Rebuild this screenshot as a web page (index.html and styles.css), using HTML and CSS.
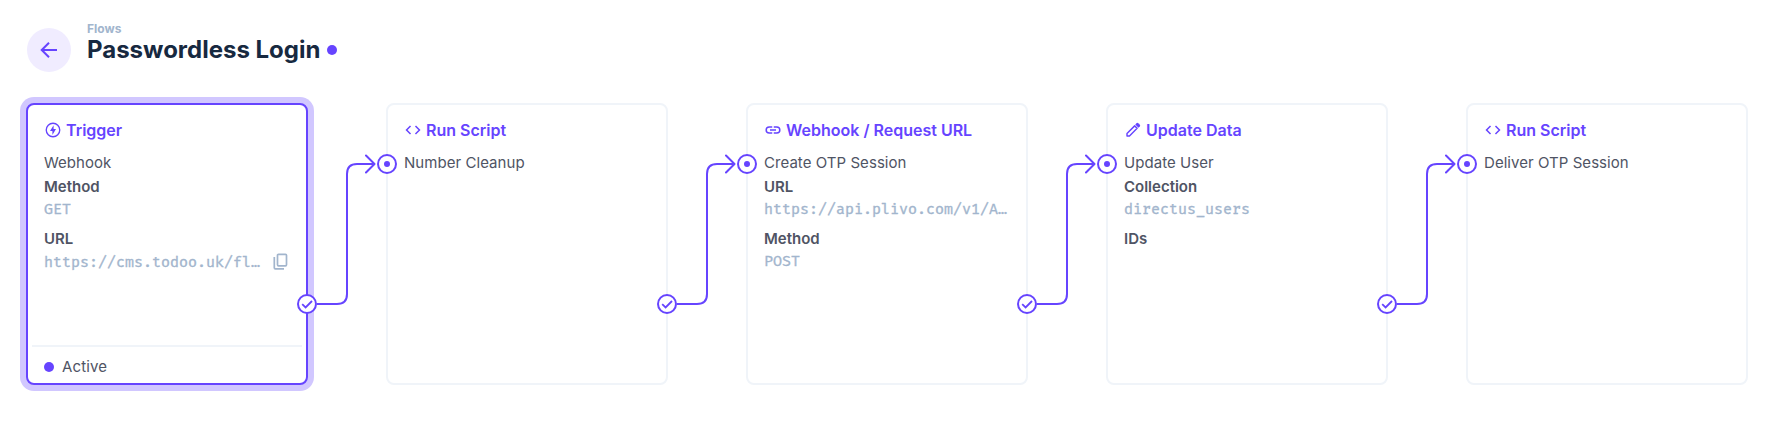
FILE: index.html
```html
<!DOCTYPE html>
<html lang="en">
<head>
<meta charset="utf-8">
<title>Passwordless Login</title>
<link rel="stylesheet" href="styles.css">
</head>
<body>
<svg class="defs" aria-hidden="true">
  <symbol id="code" viewBox="0 0 24 24"><path d="M8.7 6.7 3.4 12l5.3 5.3M15.3 6.7l5.3 5.3-5.3 5.3" fill="none" stroke="currentColor" stroke-width="2"/></symbol>
  <symbol id="check" viewBox="0 0 20 20"><circle cx="10" cy="10" r="9" fill="#fff" stroke="currentColor" stroke-width="2"/><path d="M5.2 10.2 8.6 13.5 15 7" fill="none" stroke="currentColor" stroke-width="1.8"/></symbol>
  <symbol id="target" viewBox="0 0 20 20"><circle cx="10" cy="10" r="9" fill="#fff" stroke="currentColor" stroke-width="2"/><circle cx="10" cy="10" r="3" fill="currentColor"/></symbol>
  <symbol id="wire" viewBox="0 0 60 160"><path d="M0 150H20Q30 150 30 140V20Q30 10 40 10H57M49 1.5 57.5 10 49 18.500" fill="none" stroke="currentColor" stroke-width="2" stroke-linecap="round" stroke-linejoin="round"/></symbol>
</svg>

<header class="header">
  <button class="back" aria-label="Back">
    <svg class="icon-lg" viewBox="0 0 24 24"><path d="M20 12H5M12 4.700 4.700 12l7.300 7.300" fill="none" stroke="currentColor" stroke-width="2"/></svg>
  </button>
  <div class="heading">
    <div class="crumb">Flows</div>
    <h1 class="title">Passwordless Login <span class="dot"></span></h1>
  </div>
</header>

<main class="flow">
  <section class="card selected">
    <h2 class="name"><svg class="icon" viewBox="0 0 24 24"><circle cx="12" cy="12" r="9" fill="none" stroke="currentColor" stroke-width="1.800"/><path d="M12.800 5.500 8 13.200h3.200v5.300L16 10.800h-3.200z" fill="currentColor"/></svg>Trigger</h2>
    <div class="body">
      <p class="label">Webhook</p>
      <dl class="options">
        <dt>Method</dt><dd>GET</dd>
        <dt>URL</dt><dd class="copyable"><span>https://cms.todoo.uk/fl…</span><svg class="icon" viewBox="0 0 18 18"><rect x="5.500" y="1.300" width="9" height="11.500" rx="1" fill="none" stroke="currentColor" stroke-width="1.700"/><path d="M2.300 4V14.800a1 1 0 0 0 1 1H12" fill="none" stroke="currentColor" stroke-width="1.700"/></svg></dd>
      </dl>
    </div>
    <footer class="status"><span class="dot"></span>Active</footer>
    <svg class="port out"><use href="#check"/></svg>
    <svg class="wire"><use href="#wire"/></svg>
  </section>

  <section class="card">
    <h2 class="name"><svg class="icon"><use href="#code"/></svg>Run Script</h2>
    <div class="body"><p class="label">Number Cleanup</p></div>
    <svg class="port in"><use href="#target"/></svg>
    <svg class="port out"><use href="#check"/></svg>
    <svg class="wire"><use href="#wire"/></svg>
  </section>

  <section class="card">
    <h2 class="name"><svg class="icon" viewBox="0 0 24 24"><path d="M11 7.900H7a4.100 4.100 0 0 0 0 8.200h4M13 7.900h4a4.100 4.100 0 0 1 0 8.200h-4M8 12h8" fill="none" stroke="currentColor" stroke-width="2"/></svg>Webhook / Request URL</h2>
    <div class="body">
      <p class="label">Create OTP Session</p>
      <dl class="options">
        <dt>URL</dt><dd>https://api.plivo.com/v1/A…</dd>
        <dt>Method</dt><dd>POST</dd>
      </dl>
    </div>
    <svg class="port in"><use href="#target"/></svg>
    <svg class="port out"><use href="#check"/></svg>
    <svg class="wire"><use href="#wire"/></svg>
  </section>

  <section class="card">
    <h2 class="name"><svg class="icon" viewBox="0 0 24 24"><path d="M4 20v-3.300L14.200 6.500l3.300 3.300L7.300 20z" fill="none" stroke="currentColor" stroke-width="1.900" stroke-linejoin="round"/><path d="M15 4.700 17 2.700Q18 2 19 2.900L21.200 5.100Q22 6 21.200 7L19.300 9z" fill="currentColor"/></svg>Update Data</h2>
    <div class="body">
      <p class="label">Update User</p>
      <dl class="options">
        <dt>Collection</dt><dd>directus_users</dd>
        <dt>IDs</dt>
      </dl>
    </div>
    <svg class="port in"><use href="#target"/></svg>
    <svg class="port out"><use href="#check"/></svg>
    <svg class="wire"><use href="#wire"/></svg>
  </section>

  <section class="card">
    <h2 class="name"><svg class="icon"><use href="#code"/></svg>Run Script</h2>
    <div class="body"><p class="label">Deliver OTP Session</p></div>
    <svg class="port in"><use href="#target"/></svg>
  </section>
</main>
</body>
</html>
```

FILE: styles.css
```css
* { box-sizing: border-box; margin: 0; }
body {
  min-height: 423px;
  padding: 20px 26px 0;
  background: #fff;
  color: #4f5464;
  font: 500 15px/24px Inter, sans-serif;
}
.defs { position: absolute; width: 0; height: 0; }
.header { display: flex; height: 83px; gap: 16px; padding-left: 1px; }
.back {
  display: flex; align-items: center; justify-content: center;
  width: 44px; height: 44px; margin-top: 8px; padding: 0;
  border: 0; border-radius: 50%;
  background: #f0ecff; color: #6644ff;
}
.icon-lg { width: 24px; height: 24px; }
.crumb { color: #a2b5cd; font-size: 12px; font-weight: 700; line-height: 18px; }
.title {
  display: flex; align-items: center; gap: 7px;
  color: #172940; font-size: 24px; font-weight: 700; line-height: 24px;
}
.dot { width: 10px; height: 10px; border-radius: 50%; background: #6644ff; }
.flow { display: grid; grid-template-columns: repeat(5, 282px); gap: 78px; }
.card {
  position: relative;
  display: flex; flex-direction: column;
  height: 282px;
  border: 2px solid #f0f4f9; border-radius: 8px;
  background: #fff;
}
.selected { border-color: #6644ff; box-shadow: 0 0 0 6px #d1c7ff; }
.name {
  display: flex; align-items: center; gap: 4px;
  padding: 13px 16px 0;
  color: #6644ff; font-size: 16px; font-weight: 600; line-height: 24px;
}
.icon { flex: none; width: 18px; height: 18px; }
.body { flex: 1; padding: 9px 16px 0; }
.label { font-weight: 400; letter-spacing: .05px; }
.options dt { font-weight: 600; }
.options dd {
  height: 22px; margin-bottom: 6px;
  color: #a2b5cd; font: 400 15px/21px "Fira Mono", "DejaVu Sans Mono", monospace;
  white-space: nowrap;
  -webkit-text-stroke: .35px currentColor;
}
.copyable { display: flex; align-items: center; justify-content: space-between; }
.status {
  display: flex; align-items: center; gap: 8px;
  height: 38px; margin: 0 4px; padding: 4px 12px 0;
  border-top: 2px solid #f0f4f9;
  font-weight: 400; letter-spacing: .15px;
}
.port { position: absolute; z-index: 2; width: 20px; height: 20px; color: #6644ff; }
.in { left: -11px; top: 49px; }
.out { right: -11px; top: 189px; }
.wire { position: absolute; z-index: 1; left: 289px; top: 49px; width: 60px; height: 160px; color: #6644ff; }
```
